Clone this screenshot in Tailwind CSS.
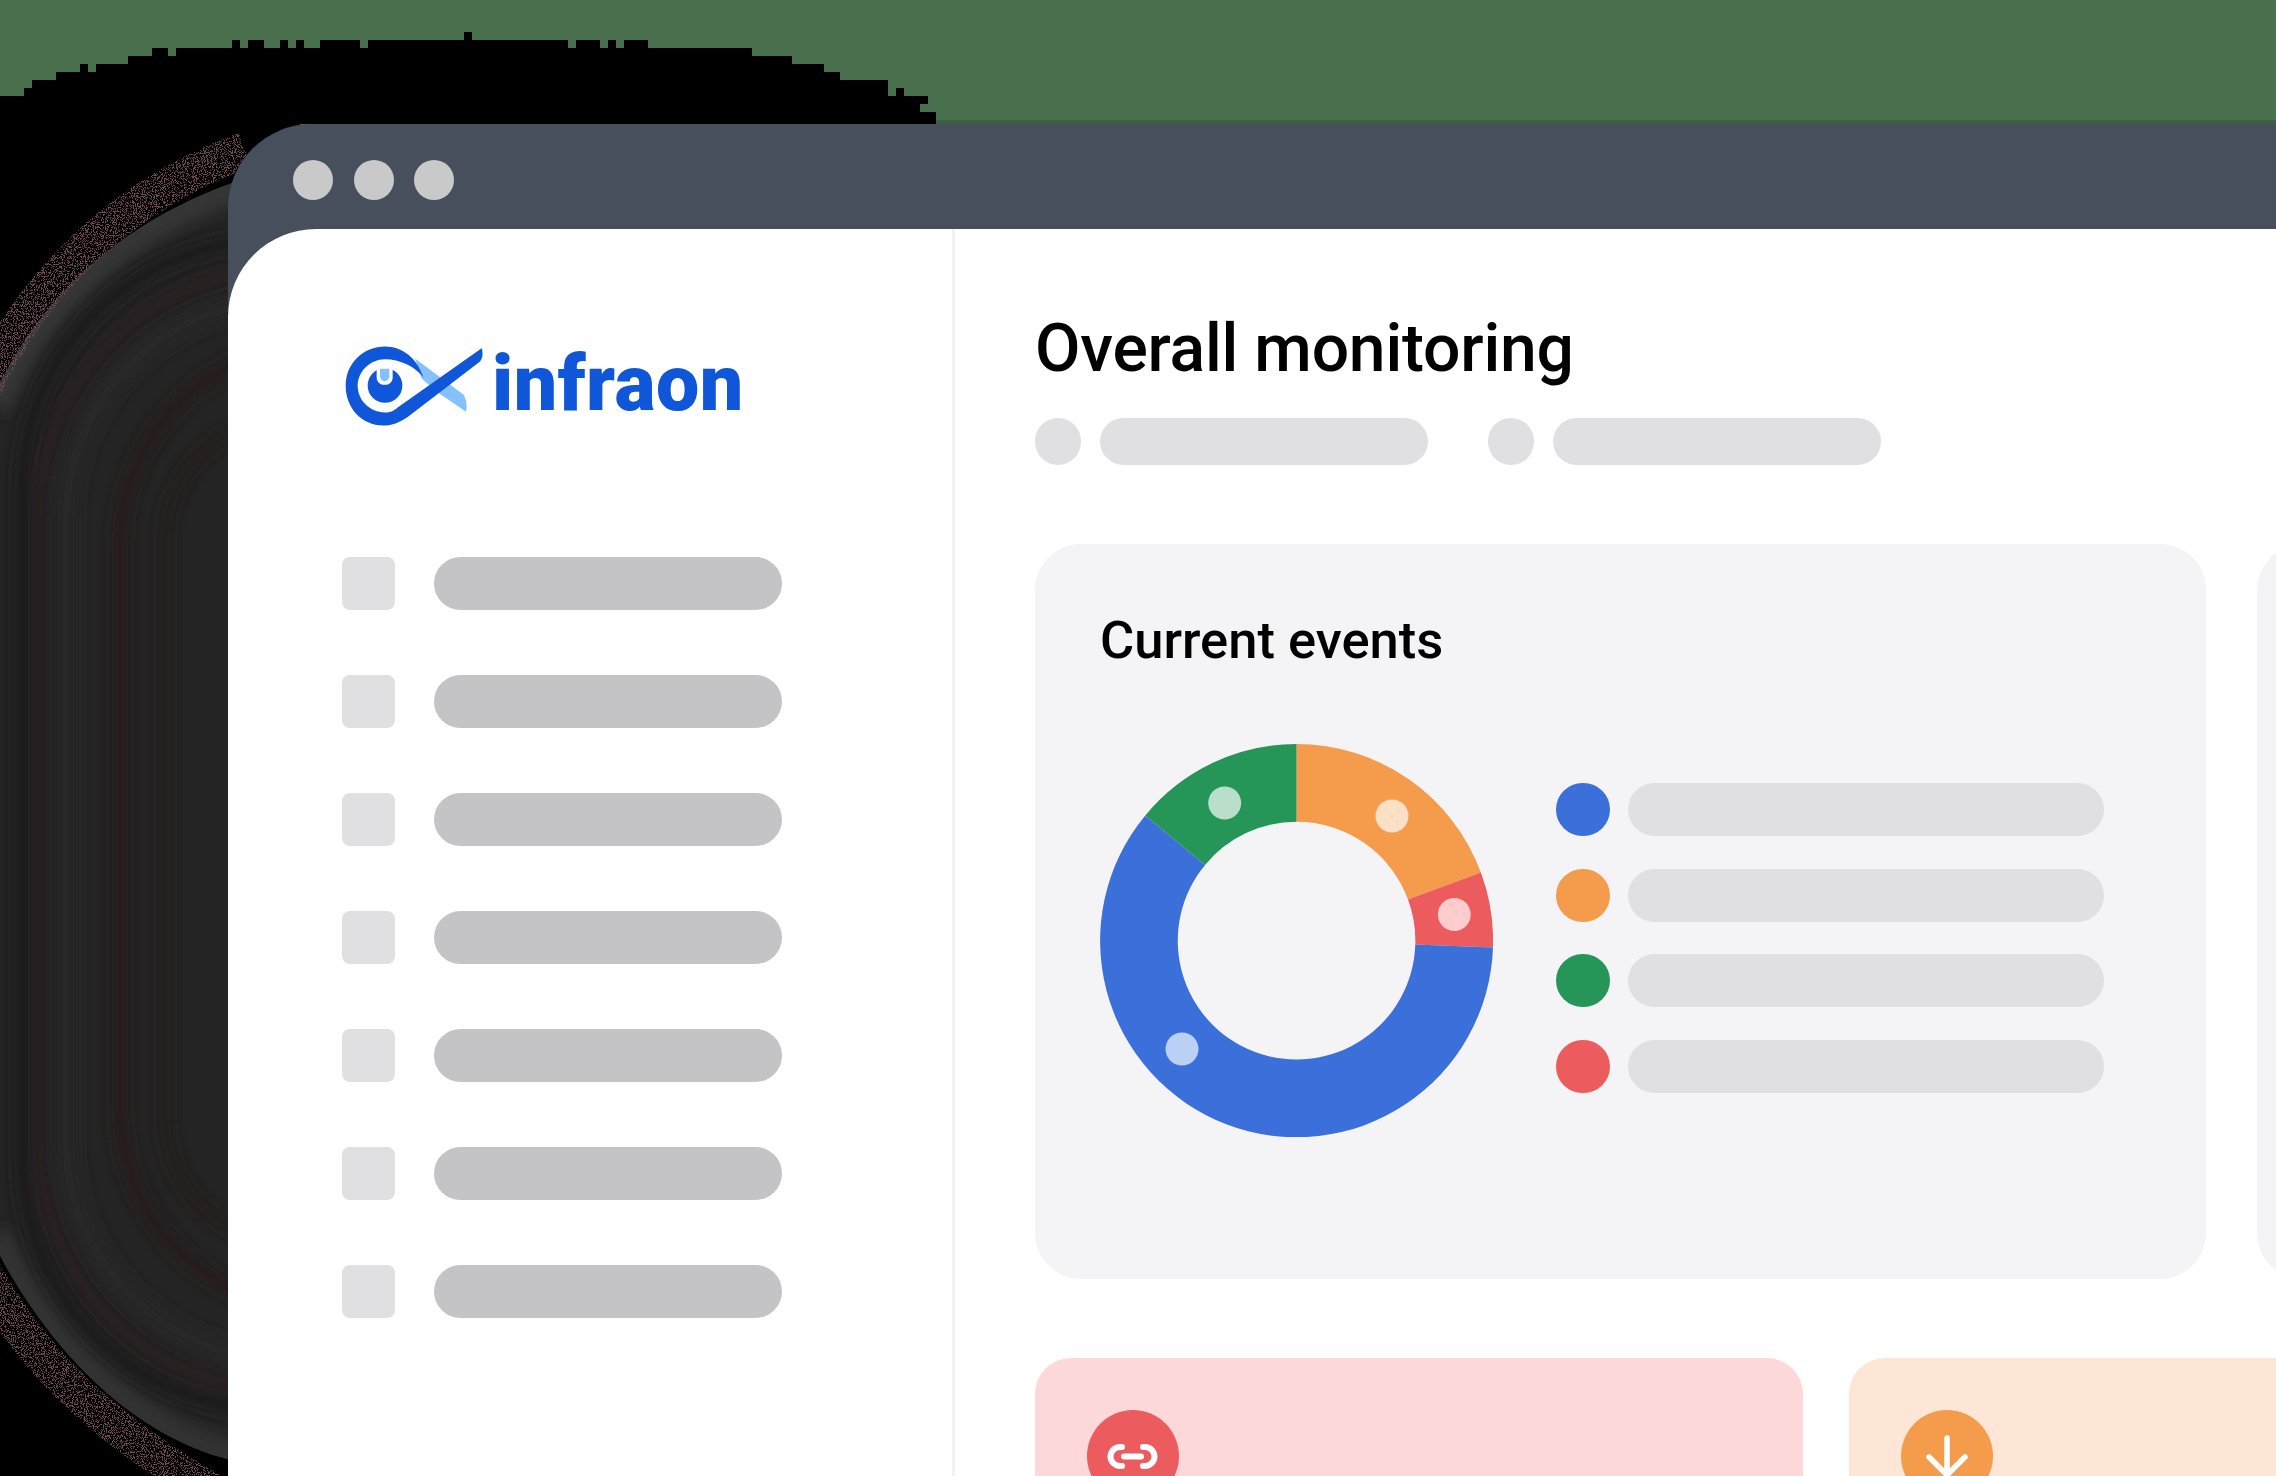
<!DOCTYPE html>
<html lang="en">
  <head>
    <meta charset="UTF-8" />
    <title>Infraon</title>
    <script src="https://cdn.jsdelivr.net/npm/@tailwindcss/browser@4"></script>
  </head>

  <body class="relative w-[2276px] h-[1476px] overflow-hidden bg-[#49714e] font-['Roboto',sans-serif]">
    <!-- backdrop behind the window -->
    <svg class="absolute inset-0" width="2276" height="1476" viewBox="0 0 2276 1476" fill="none">
      <defs>
        <clipPath id="glow-clip">
          <path d="M-10 405 C30 310 110 225 240 180 V1462 C130 1440 40 1340 -10 1236 Z" />
        </clipPath>
        <filter id="soft" x="-20%" y="-20%" width="140%" height="140%">
          <feGaussianBlur stdDeviation="7" />
        </filter>
        <filter id="grain" x="-10%" y="-10%" width="120%" height="120%">
          <feTurbulence type="fractalNoise" baseFrequency="0.9" numOctaves="2" seed="4" result="n" />
          <feColorMatrix in="n" type="matrix" values="0 0 0 0 0  0 0 0 0 0  0 0 0 0 0  0 0 0 14 -7.2" result="t" />
          <feComposite in="SourceGraphic" in2="t" operator="in" />
        </filter>
      </defs>
      <rect y="120" x="930" width="1346" height="4" fill="#3d5f43" />
      <path
        fill="#000"
        d="M0 96H24V88H32V80H56V72H80V64H88V72H96V64H128V56H152V48H168V56H176V48H232V40H240V48H248V40H264V48H280V40H288V48H296V40H304V48H320V40H360V48H368V40H464V32H472V40H568V48H576V40H600V48H608V40H616V48H624V40H648V48H752V56H792V64H824V72H840V80H888V96H896V88H904V96H928V104H920V112H936V124H228V600H0Z"
      />
      <rect y="100" width="300" height="1376" fill="#000" />
      <path d="M-10 405 C30 310 110 225 240 180 V1462 C130 1440 40 1340 -10 1236 Z" fill="#242424" />
      <g clip-path="url(#glow-clip)">
        <path d="M-10 405 C30 310 110 225 240 180" stroke="#343434" stroke-width="40" filter="url(#soft)" />
        <path d="M-10 1236 C40 1340 130 1440 240 1462" stroke="#323232" stroke-width="40" filter="url(#soft)" />
        <rect x="22" y="240" width="900" height="1170" rx="250" stroke="#1e1e1e" stroke-width="16" filter="url(#soft)" />
        <rect x="40" y="268" width="900" height="1126" rx="250" stroke="#2a1e20" stroke-width="12" filter="url(#soft)" />
        <rect x="66" y="300" width="900" height="1060" rx="220" stroke="#262827" stroke-width="24" filter="url(#soft)" />
        <rect x="120" y="345" width="900" height="964" rx="200" stroke="#271e1f" stroke-width="16" filter="url(#soft)" />
        <rect x="165" y="420" width="900" height="820" rx="120" stroke="#271e1f" stroke-width="12" filter="url(#soft)" />
      </g>
      <path d="M-20 395 C30 290 110 200 245 150" stroke="#6f4a58" stroke-width="36" filter="url(#grain)" />
      <path d="M-20 1265 C25 1350 90 1420 210 1490" stroke="#6f4a58" stroke-width="36" filter="url(#grain)" />
    </svg>

    <div class="relative ml-[228px] mt-[124px] h-[1352px] rounded-tl-[84px] bg-[#474f5c]">
      <div class="h-[105px] flex items-center pl-[65px] pt-[7px]">
        <div class="flex gap-[20.5px]">
          <span class="w-10 h-10 rounded-full bg-[#c9c9c9]"></span>
          <span class="w-10 h-10 rounded-full bg-[#c9c9c9]"></span>
          <span class="w-10 h-10 rounded-full bg-[#c9c9c9]"></span>
        </div>
      </div>

      <div class="h-[1247px] rounded-tl-[88px] bg-white flex overflow-hidden">
        <aside class="w-[727px] shrink-0 border-r-[3px] border-[#f2f2f4] pl-[114px] pt-[114px]">
          <div class="h-[214px] -ml-[2px] flex items-start">
            <svg width="150" height="87" viewBox="60 70 450 260" class="shrink-0">
              <path d="M285 116 L430 224 C441 240 441 262 438 276 L350 216 L305 176 Z" fill="#85c1ff" />
              <path
                d="M485 85 C490 100 488 115 480 125 L262 292 C236 310 212 317 190 317 C125 317 77 265 77 198 C77 130 130 80 195 80 C250 80 292 118 310 172 C285 140 240 118 195 118 C150 118 113 155 113 198 C113 242 150 278 195 278 C212 278 222 272 234 262 Z"
                fill="#0f56d9"
              />
              <circle cx="195" cy="197" r="52" fill="#0f56d9" />
              <path d="M170 140 H218 V172 C218 186 208 195 194 195 C180 195 170 186 170 172 Z" fill="#fff" />
              <path d="M180 147 H208 V170 C208 178 202 184 194 184 C186 184 180 178 180 170 Z" fill="#85c1ff" />
            </svg>
            <span class="ml-[2px] mt-[-9px] text-[77px] leading-[100px] font-black text-[#0f56d9] tracking-[0.5px]">infraon</span>
          </div>

          <ul class="flex flex-col gap-[65px]">
            <li class="flex gap-[39px]"><span class="w-[53px] h-[53px] rounded-lg bg-[#e0dfe2]"></span><span class="w-[348px] h-[53px] rounded-full bg-[#c4c3c6]"></span></li>
            <li class="flex gap-[39px]"><span class="w-[53px] h-[53px] rounded-lg bg-[#e0dfe2]"></span><span class="w-[348px] h-[53px] rounded-full bg-[#c4c3c6]"></span></li>
            <li class="flex gap-[39px]"><span class="w-[53px] h-[53px] rounded-lg bg-[#e0dfe2]"></span><span class="w-[348px] h-[53px] rounded-full bg-[#c4c3c6]"></span></li>
            <li class="flex gap-[39px]"><span class="w-[53px] h-[53px] rounded-lg bg-[#e0dfe2]"></span><span class="w-[348px] h-[53px] rounded-full bg-[#c4c3c6]"></span></li>
            <li class="flex gap-[39px]"><span class="w-[53px] h-[53px] rounded-lg bg-[#e0dfe2]"></span><span class="w-[348px] h-[53px] rounded-full bg-[#c4c3c6]"></span></li>
            <li class="flex gap-[39px]"><span class="w-[53px] h-[53px] rounded-lg bg-[#e0dfe2]"></span><span class="w-[348px] h-[53px] rounded-full bg-[#c4c3c6]"></span></li>
            <li class="flex gap-[39px]"><span class="w-[53px] h-[53px] rounded-lg bg-[#e0dfe2]"></span><span class="w-[348px] h-[53px] rounded-full bg-[#c4c3c6]"></span></li>
          </ul>
        </aside>

        <main class="flex-1 min-w-0 pl-[80px] pt-[80px] overflow-hidden">
          <h1 class="h-[109px] text-[66px] leading-[80px] font-medium text-black whitespace-nowrap tracking-[-0.2px]">Overall monitoring</h1>

          <div class="flex items-center">
            <span class="w-[46px] h-[47px] rounded-full bg-[#e0dfe2]"></span>
            <span class="ml-[19px] w-[328px] h-[47px] rounded-full bg-[#e0dfe2]"></span>
            <span class="ml-[60px] w-[46px] h-[47px] rounded-full bg-[#e0dfe2]"></span>
            <span class="ml-[19px] w-[328px] h-[47px] rounded-full bg-[#e0dfe2]"></span>
          </div>

          <div class="mt-[79px] flex gap-[51px]">
            <section class="w-[1171px] h-[735px] shrink-0 rounded-[46px] bg-[#f4f3f6] pl-[65px] pt-[66px]">
              <h2 class="h-[134px] text-[52.5px] leading-[60px] font-medium text-black whitespace-nowrap">Current events</h2>
              <div class="flex items-start">
                <svg width="393" height="393" viewBox="0 0 393 393" class="shrink-0">
                  <path d="M196.5 0 A196.5 196.5 0 0 1 380.9 128.6 L308 155.4 A118.8 118.8 0 0 0 196.5 77.7 Z" fill="#f59b4c" />
                  <path d="M380.9 128.6 A196.5 196.5 0 0 1 393 203.4 L315.3 200.6 A118.8 118.8 0 0 0 308 155.4 Z" fill="#ec5b5e" />
                  <path d="M393 203.4 A196.5 196.5 0 1 1 45.3 71.4 L105.1 120.9 A118.8 118.8 0 1 0 315.3 200.6 Z" fill="#3b70db" />
                  <path d="M45.3 71.4 A196.5 196.5 0 0 1 196.5 0 V77.7 A118.8 118.8 0 0 0 105.1 120.9 Z" fill="#259657" />
                  <circle cx="124.7" cy="59" r="16.5" fill="#b9dfca" />
                  <circle cx="292" cy="72" r="16.5" fill="#fbe0c6" />
                  <circle cx="354.3" cy="170.5" r="16.5" fill="#fdcccc" />
                  <circle cx="82" cy="305" r="16.5" fill="#bad0f5" />
                </svg>
                <ul class="ml-[63px] mt-[39px] flex flex-col gap-[32.5px]">
                  <li class="flex gap-[18px]"><span class="w-[54px] h-[53px] rounded-full bg-[#3b70db]"></span><span class="w-[476px] h-[53px] rounded-full bg-[#e0dfe2]"></span></li>
                  <li class="flex gap-[18px]"><span class="w-[54px] h-[53px] rounded-full bg-[#f59b4c]"></span><span class="w-[476px] h-[53px] rounded-full bg-[#e0dfe2]"></span></li>
                  <li class="flex gap-[18px]"><span class="w-[54px] h-[53px] rounded-full bg-[#259657]"></span><span class="w-[476px] h-[53px] rounded-full bg-[#e0dfe2]"></span></li>
                  <li class="flex gap-[18px]"><span class="w-[54px] h-[53px] rounded-full bg-[#ec5b5e]"></span><span class="w-[476px] h-[53px] rounded-full bg-[#e0dfe2]"></span></li>
                </ul>
              </div>
            </section>
            <section class="w-[600px] h-[735px] shrink-0 rounded-[46px] bg-[#f4f3f6]"></section>
          </div>

          <div class="mt-[79px] flex gap-[46px]">
            <section class="w-[768px] h-[300px] shrink-0 rounded-[36px] bg-[#fdd8d8] pl-[52px] pt-[52px]">
              <div class="w-[92px] h-[92px] rounded-full bg-[#ec5b5e]">
                <svg width="92" height="92" viewBox="0 0 92 92" fill="none" stroke="#fff" stroke-width="6" stroke-linecap="round">
                  <path d="M35 37 H33 A9.5 9.5 0 0 0 33 56 H35" />
                  <path d="M56 37 H58 A9.5 9.5 0 0 1 58 56 H56" />
                  <path d="M37 46.5 H54" />
                </svg>
              </div>
            </section>
            <section class="w-[600px] h-[300px] shrink-0 rounded-[36px] bg-[#fde6d5] pl-[52px] pt-[52px]">
              <div class="w-[92px] h-[92px] rounded-full bg-[#f59b4c]">
                <svg width="92" height="92" viewBox="0 0 92 92" fill="none" stroke="#fff" stroke-width="5.5" stroke-linecap="round" stroke-linejoin="round">
                  <path d="M46 28 V64" />
                  <path d="M28 47 L46 65 L64 47" />
                </svg>
              </div>
            </section>
          </div>
        </main>
      </div>
    </div>
  </body>
</html>
